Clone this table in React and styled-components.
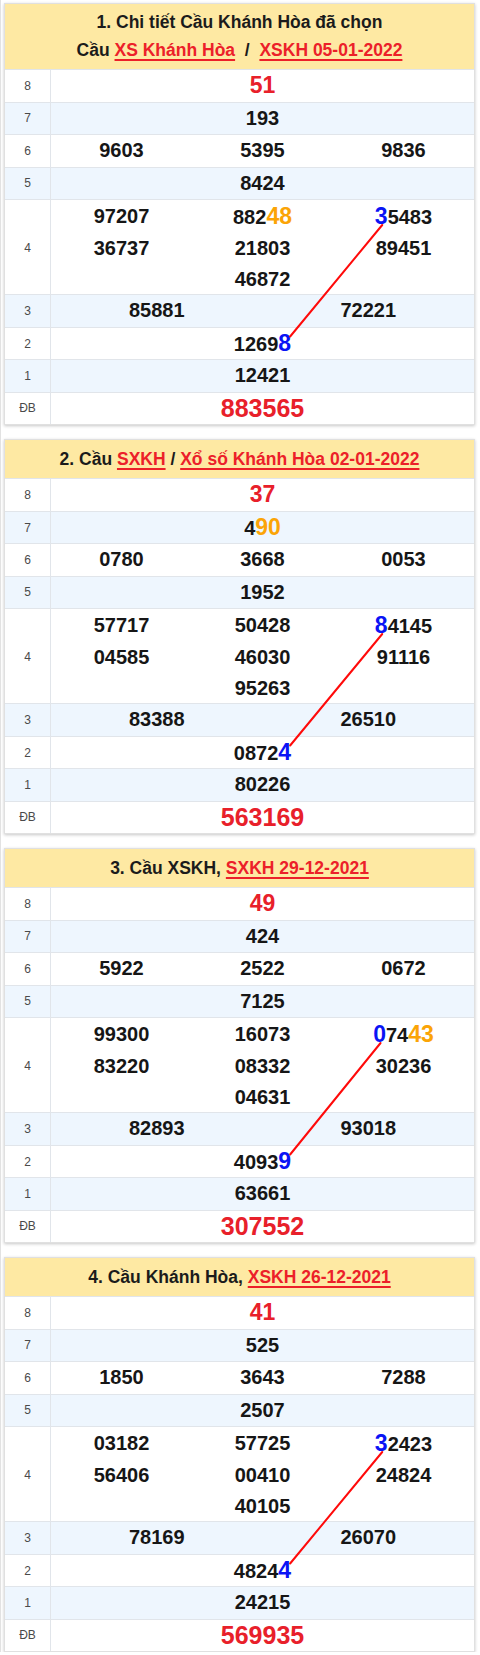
import React, { useLayoutEffect, useRef, useState } from 'react'
import styled, { createGlobalStyle } from 'styled-components'

const GlobalStyle = createGlobalStyle`
  html, body { margin: 0; padding: 0; background: #fff; }
  body { font-family: "Liberation Sans", Arial, sans-serif; }
`

const Page = styled.div`
  width: 480px;
  box-sizing: border-box;
  padding: 3px 5px 0 3px;
  border-left: 1px solid #e2e2e2;
  display: flex;
  flex-direction: column;
  gap: 14px;
`

const Card = styled.div`
  position: relative;
  border: 1px solid #e0e0e0;
  box-shadow: 0 1px 3px rgba(0, 0, 0, 0.22);
  background: #fff;
`

const Header = styled.div`
  background: #fee9a3;
  color: #1b1b1b;
  font-weight: bold;
  font-size: 17.5px;
  line-height: 28px;
  text-align: center;
  padding: ${p => (p.$tall ? '4px 0 5px' : '5px 0 5px')};
`

const HLink = styled.span`
  color: #ec2029;
  text-decoration: underline;
  text-decoration-thickness: 1.5px;
  text-underline-offset: 3px;
`

const Row = styled.div`
  display: grid;
  grid-template-columns: 46px 1fr;
  height: ${p => (p.$multi ? '95px' : '32.5px')};
  box-sizing: border-box;
  border-top: 1px solid #e1e5ea;
  background: ${p => (p.$alt ? '#eef6fe' : '#fff')};
`

const Label = styled.div`
  display: flex;
  align-items: center;
  justify-content: center;
  font-size: 12px;
  color: #4a4a4a;
  border-right: 1px solid #e1e5ea;
`

const Numbers = styled.div`
  display: flex;
  flex-wrap: wrap;
  justify-content: center;
  align-content: ${p => (p.$multi ? 'flex-start' : 'center')};
  padding-top: ${p => (p.$multi ? '1px' : '0')};
`

const Num = styled.div`
  width: ${p => 100 / p.$cols}%;
  text-align: center;
  font-weight: bold;
  font-size: ${p => p.$size}px;
  line-height: 31px;
  color: ${p => (p.$red ? '#e8202a' : '#161616')};
`

const Blue = styled.span`
  color: #0a14f5;
  font-size: 23px;
`

const Orange = styled.span`
  color: #fba406;
  font-size: 23px;
`

const Overlay = styled.svg`
  position: absolute;
  left: 0;
  top: 0;
  width: 100%;
  height: 100%;
  pointer-events: none;
  overflow: visible;
`

const renderNum = (str) => {
  const parts = str.split(/(\[[0-9]+\]|\{[0-9]+\})/).filter(Boolean)
  return parts.map((p, i) => {
    if (p[0] === '[') return <Blue key={i} data-mark="1">{p.slice(1, -1)}</Blue>
    if (p[0] === '{') return <Orange key={i}>{p.slice(1, -1)}</Orange>
    return <React.Fragment key={i}>{p}</React.Fragment>
  })
}

const cards = [
  {
    tall: true,
    title: (
      <>
        1. Chi tiết Cầu Khánh Hòa đã chọn
        <br />
        Cầu <HLink>XS Khánh Hòa</HLink>&nbsp; / &nbsp;<HLink>XSKH 05-01-2022</HLink>
      </>
    ),
    rows: [
      ['51'], ['193'], ['9603', '5395', '9836'], ['8424'],
      ['97207', '882{48}', '[3]5483', '36737', '21803', '89451', '46872'],
      ['85881', '72221'], ['1269[8]'], ['12421'], ['883565'],
    ],
  },
  {
    title: (
      <>
        2. Cầu <HLink>SXKH</HLink> / <HLink>Xổ số Khánh Hòa 02-01-2022</HLink>
      </>
    ),
    rows: [
      ['37'], ['4{90}'], ['0780', '3668', '0053'], ['1952'],
      ['57717', '50428', '[8]4145', '04585', '46030', '91116', '95263'],
      ['83388', '26510'], ['0872[4]'], ['80226'], ['563169'],
    ],
  },
  {
    title: (
      <>
        3. Cầu XSKH, <HLink>SXKH 29-12-2021</HLink>
      </>
    ),
    rows: [
      ['49'], ['424'], ['5922', '2522', '0672'], ['7125'],
      ['99300', '16073', '[0]74{43}', '83220', '08332', '30236', '04631'],
      ['82893', '93018'], ['4093[9]'], ['63661'], ['307552'],
    ],
  },
  {
    title: (
      <>
        4. Cầu Khánh Hòa, <HLink>XSKH 26-12-2021</HLink>
      </>
    ),
    rows: [
      ['41'], ['525'], ['1850', '3643', '7288'], ['2507'],
      ['03182', '57725', '[3]2423', '56406', '00410', '24824', '40105'],
      ['78169', '26070'], ['4824[4]'], ['24215'], ['569935'],
    ],
  },
]

const labels = ['8', '7', '6', '5', '4', '3', '2', '1', 'ĐB']

const ResultCard = ({ card }) => {
  const ref = useRef(null)
  const [line, setLine] = useState(null)

  useLayoutEffect(() => {
    const el = ref.current
    if (!el) return
    const marks = el.querySelectorAll('[data-mark]')
    if (marks.length < 2) return
    const box = el.getBoundingClientRect()
    const a = marks[0].getBoundingClientRect()
    const b = marks[1].getBoundingClientRect()
    setLine({
      x1: a.left + a.width / 2 - box.left,
      y1: a.bottom - 5 - box.top,
      x2: b.right - 2 - box.left,
      y2: b.top + 6 - box.top,
    })
  }, [])

  return (
    <Card ref={ref}>
      <Header $tall={card.tall}>{card.title}</Header>
      {card.rows.map((nums, i) => {
        const multi = nums.length > 3
        const cols = multi ? 3 : nums.length
        const size = i === 0 ? 23 : i === 8 ? 25 : 20
        return (
          <Row key={i} $alt={i % 2 === 1} $multi={multi}>
            <Label>{labels[i]}</Label>
            <Numbers $multi={multi}>
              {nums.map((n, j) => (
                <Num key={j} $cols={cols} $size={size} $red={i === 0 || i === 8}>
                  {renderNum(n)}
                </Num>
              ))}
            </Numbers>
          </Row>
        )
      })}
      {line && (
        <Overlay>
          <line {...line} stroke="#ff0a0a" strokeWidth="2" strokeLinecap="round" />
        </Overlay>
      )}
    </Card>
  )
}

const App = () => (
  <>
    <GlobalStyle />
    <Page>
      {cards.map((c, i) => (
        <ResultCard key={i} card={c} />
      ))}
    </Page>
  </>
)

export default App
